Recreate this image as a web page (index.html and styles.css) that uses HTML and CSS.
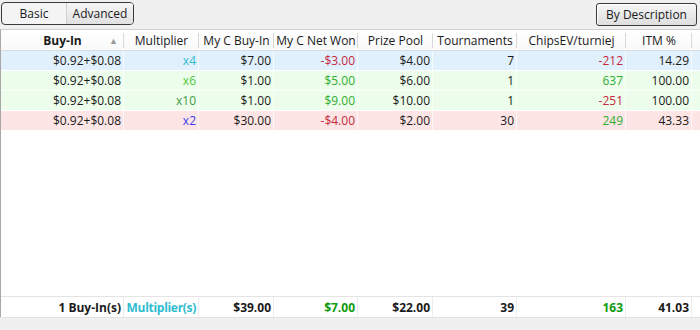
FILE: index.html
```html
<!DOCTYPE html>
<html>
<head>
<meta charset="utf-8">
<link rel="stylesheet" href="styles.css">
</head>
<body>
<div class="toolbar">
  <div class="seg">
    <span class="seg-btn">Basic</span>
    <span class="seg-btn active">Advanced</span>
  </div>
  <span class="btn">By Description</span>
</div>
<div class="grid">
  <div class="row head">
    <div class="hc sort"><span class="sp"></span><b>Buy-In</b><span class="arrow">▲</span></div>
    <div class="hc">Multiplier</div>
    <div class="hc">My C Buy-In</div>
    <div class="hc">My C Net Won</div>
    <div class="hc">Prize Pool</div>
    <div class="hc">Tournaments</div>
    <div class="hc">ChipsEV/turniej</div>
    <div class="hc">ITM %</div>
  </div>
  <div class="body">
    <div class="row data blue">
      <div>$0.92+$0.08</div><div class="cyan">x4</div><div>$7.00</div><div class="neg">-$3.00</div><div>$4.00</div><div>7</div><div class="neg">-212</div><div>14.29</div>
    </div>
    <div class="row data green">
      <div>$0.92+$0.08</div><div class="lgreen">x6</div><div>$1.00</div><div class="pos">$5.00</div><div>$6.00</div><div>1</div><div class="pos">637</div><div>100.00</div>
    </div>
    <div class="row data green">
      <div>$0.92+$0.08</div><div class="dgreen">x10</div><div>$1.00</div><div class="pos">$9.00</div><div>$10.00</div><div>1</div><div class="neg">-251</div><div>100.00</div>
    </div>
    <div class="row data red">
      <div>$0.92+$0.08</div><div class="violet">x2</div><div>$30.00</div><div class="neg">-$4.00</div><div>$2.00</div><div>30</div><div class="pos">249</div><div>43.33</div>
    </div>
  </div>
  <div class="row foot">
    <div><span>1 Buy-In(s)</span></div><div class="cyan mult"><span>4 Multiplier(s)</span></div><div><span>$39.00</span></div><div class="fgreen"><span>$7.00</span></div><div><span>$22.00</span></div><div><span>39</span></div><div class="fgreen"><span>163</span></div><div><span>41.03</span></div>
  </div>
</div>
<div class="bottom"></div>
</body>
</html>
```
FILE: styles.css
```css
html, body {
  margin: 0;
  padding: 0;
}
body {
  width: 700px;
  height: 330px;
  overflow: hidden;
  background: #f0f0f0;
  font-family: "Open Sans", "Noto Sans", sans-serif;
  font-size: 12px;
  color: #1a1a1a;
}
.toolbar {
  height: 29px;
  display: flex;
  justify-content: space-between;
  align-items: flex-start;
  padding: 2px 3px 0 1px;
  box-sizing: border-box;
}
.seg {
  display: flex;
  height: 23px;
  border: 1px solid #3a3a3a;
  border-radius: 4px;
  overflow: hidden;
  box-sizing: border-box;
  background: #f4f4f4;
}
.seg-btn {
  display: flex;
  align-items: center;
  justify-content: center;
  height: 100%;
}
.seg-btn:first-child {
  width: 64px;
}
.seg-btn.active {
  width: 66px;
  background: linear-gradient(#f6f6f6, #e0e0e0);
  border-left: 1px solid #d0d0d0;
}
.btn {
  display: flex;
  align-items: center;
  justify-content: center;
  width: 101px;
  height: 23px;
  margin-top: 1px;
  box-sizing: border-box;
  border: 1px solid #3a3a3a;
  border-radius: 3px;
  background: linear-gradient(#f6f6f6, #dedede);
  box-shadow: inset 1px 1px 0 #fff;
}
.grid {
  height: 288px;
  display: flex;
  flex-direction: column;
  background: #fff;
  border-left: 1px solid #a8a8a8;
  border-top: 1px solid #d0d0d0;
  box-sizing: border-box;
}
.row {
  display: grid;
  grid-template-columns: 123px 75px 75px 84px 75px 84px 109px 66px;
}
.head {
  height: 20px;
  background: linear-gradient(#ffffff, #f9f9f9);
  border-bottom: 1px solid #dcdcdc;
}
.hc {
  display: flex;
  align-items: center;
  justify-content: center;
  background: linear-gradient(#d8d8d8, #d8d8d8) no-repeat right center / 1px 15px;
  white-space: nowrap;
}
.hc.sort {
  display: grid;
  grid-template-columns: 1fr auto 1fr;
  align-items: center;
}
.hc b {
  font-weight: 700;
}
.arrow {
  justify-self: end;
  margin-right: 6px;
  font-size: 9px;
  color: #9a9a9a;
}
.body {
  flex: 1;
}
.data {
  height: 19px;
  border-bottom: 1px solid #fff;
}
.data > div {
  display: flex;
  align-items: center;
  justify-content: flex-end;
  padding-right: 2px;
  border-right: 1px solid rgba(255, 255, 255, 0.7);
  white-space: nowrap;
}
.blue { background: #e0f0fc; }
.green { background: #ecfdeb; }
.red { background: #fde5e5; }
.cyan { color: #2fbcd0; }
.lgreen { color: #4fc83c; }
.dgreen { color: #3f9a3f; }
.violet { color: #3c3cf0; }
.neg { color: #c4283c; }
.pos { color: #2eae2e; }
.foot {
  height: 20px;
  border-top: 1px solid #e4e4e4;
  font-weight: 700;
}
.foot > div {
  display: flex;
  align-items: center;
  justify-content: flex-end;
  overflow: hidden;
  padding-right: 2px;
  border-right: 1px solid #ececec;
  white-space: nowrap;
}
.foot > div > span {
  flex-shrink: 0;
}
.foot > .mult > span {
  letter-spacing: -0.3px;
}
.fgreen { color: #109c10; }
.bottom {
  height: 13px;
  background: #f0f0f0;
  border-top: 1px solid #e2e2e2;
}
```
